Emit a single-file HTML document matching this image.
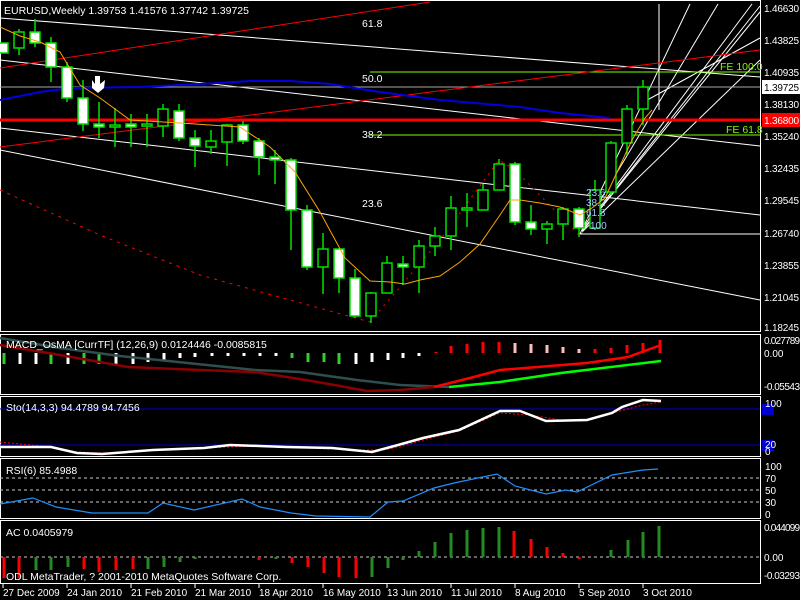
<!DOCTYPE html>
<html><head><meta charset="utf-8"><style>
html,body{margin:0;padding:0;background:#000;width:800px;height:600px;overflow:hidden}
svg{display:block}
text{font-family:"Liberation Sans",sans-serif;font-size:10.5px;fill:#fff}
.ax{font-size:10px}
</style></head><body>
<svg width="800" height="600" viewBox="0 0 800 600" xmlns="http://www.w3.org/2000/svg">
<rect width="800" height="600" fill="#000"/>
<rect x="0.5" y="0.5" width="760" height="331" fill="none" stroke="#fff"/>
<g stroke="#fff" stroke-width="1" fill="none">
<line x1="0" y1="18" x2="760" y2="77"/>
<line x1="0" y1="60" x2="760" y2="146"/>
<line x1="0" y1="128" x2="760" y2="215"/>
<line x1="0" y1="150" x2="760" y2="300"/>
<line x1="580" y1="234" x2="760" y2="234"/>
<line x1="659" y1="4" x2="659" y2="110"/>
<line x1="580" y1="234" x2="690" y2="4"/>
<line x1="580" y1="234" x2="718" y2="4"/>
<line x1="580" y1="234" x2="752" y2="4"/>
<line x1="580" y1="234" x2="760" y2="6"/>
<line x1="580" y1="234" x2="760" y2="60"/>
<line x1="580" y1="234" x2="760" y2="12"/>
<line x1="640" y1="104" x2="760" y2="38"/>
</g>
<line x1="0" y1="87" x2="760" y2="87" stroke="#aaa"/>
<line x1="370" y1="72" x2="760" y2="72" stroke="#7cfc00"/>
<line x1="370" y1="135" x2="760" y2="135" stroke="#7cfc00"/>
<g stroke="#f00" fill="none">
<line x1="0" y1="68" x2="430" y2="2"/>
<line x1="0" y1="147" x2="760" y2="50"/>
<line x1="0" y1="120" x2="760" y2="120" stroke-width="3"/>
<polyline stroke-dasharray="3,5" points="0,190 100,235 200,275 290,300 370,322"/>
<polyline stroke-dasharray="2,5" points="370,322 440,240 499,160 515,170 580,236 600,190"/>
</g>
<polyline fill="none" stroke="#0000e0" stroke-width="2" points="0,100 40,92 70,88 140,87 200,84 250,81 290,81 330,84 380,92 440,100 520,107 560,113 610,118"/>
<g stroke="#00e000" stroke-width="1.5">
<line x1="19" y1="29" x2="19" y2="55"/><line x1="35" y1="19" x2="35" y2="47"/><line x1="51" y1="37" x2="51" y2="82"/><line x1="67" y1="62" x2="67" y2="102"/><line x1="83" y1="80" x2="83" y2="131"/><line x1="99" y1="102" x2="99" y2="138"/><line x1="115" y1="108" x2="115" y2="147"/><line x1="131" y1="114" x2="131" y2="147"/><line x1="147" y1="114" x2="147" y2="147"/><line x1="163" y1="104" x2="163" y2="137"/><line x1="179" y1="104" x2="179" y2="141"/><line x1="195" y1="130" x2="195" y2="167"/><line x1="211" y1="130" x2="211" y2="154"/><line x1="227" y1="124" x2="227" y2="166"/><line x1="243" y1="121" x2="243" y2="144"/><line x1="259" y1="138" x2="259" y2="175"/><line x1="275" y1="150" x2="275" y2="184"/><line x1="291" y1="158" x2="291" y2="250"/><line x1="307" y1="205" x2="307" y2="270"/><line x1="323" y1="233" x2="323" y2="294"/><line x1="339" y1="248" x2="339" y2="293"/><line x1="355" y1="269" x2="355" y2="318"/><line x1="371" y1="292" x2="371" y2="323"/><line x1="387" y1="256" x2="387" y2="293"/><line x1="403" y1="256" x2="403" y2="285"/><line x1="419" y1="240" x2="419" y2="293"/><line x1="435" y1="227" x2="435" y2="256"/><line x1="451" y1="196" x2="451" y2="250"/><line x1="467" y1="193" x2="467" y2="227"/><line x1="483" y1="184" x2="483" y2="210"/><line x1="499" y1="159" x2="499" y2="190"/><line x1="515" y1="162" x2="515" y2="225"/><line x1="531" y1="205" x2="531" y2="235"/><line x1="547" y1="221" x2="547" y2="244"/><line x1="563" y1="207" x2="563" y2="240"/><line x1="579" y1="207" x2="579" y2="237"/><line x1="595" y1="180" x2="595" y2="230"/><line x1="611" y1="141" x2="611" y2="195"/><line x1="627" y1="105" x2="627" y2="155"/><line x1="643" y1="80" x2="643" y2="125"/>
</g>
<g stroke="#00e000" stroke-width="1.5">
<rect x="-2" y="43" width="10" height="10" fill="#fff"/>
<rect x="14" y="32" width="10" height="16" fill="#000"/>
<rect x="30" y="32" width="10" height="11" fill="#fff"/>
<rect x="46" y="43" width="10" height="24" fill="#fff"/>
<rect x="62" y="67" width="10" height="31" fill="#fff"/>
<rect x="78" y="98" width="10" height="26" fill="#fff"/>
<rect x="94" y="124" width="10" height="3" fill="#fff"/>
<rect x="110" y="125" width="10" height="2" fill="#000"/>
<rect x="126" y="124" width="10" height="3" fill="#fff"/>
<rect x="142" y="124" width="10" height="2" fill="#000"/>
<rect x="158" y="109" width="10" height="17" fill="#000"/>
<rect x="174" y="111" width="10" height="27" fill="#fff"/>
<rect x="190" y="138" width="10" height="8" fill="#fff"/>
<rect x="206" y="141" width="10" height="6" fill="#000"/>
<rect x="222" y="125" width="10" height="17" fill="#000"/>
<rect x="238" y="125" width="10" height="16" fill="#fff"/>
<rect x="254" y="141" width="10" height="16" fill="#fff"/>
<rect x="270" y="157" width="10" height="3" fill="#fff"/>
<rect x="286" y="160" width="10" height="50" fill="#fff"/>
<rect x="302" y="210" width="10" height="57" fill="#fff"/>
<rect x="318" y="249" width="10" height="18" fill="#000"/>
<rect x="334" y="249" width="10" height="29" fill="#fff"/>
<rect x="350" y="278" width="10" height="38" fill="#fff"/>
<rect x="366" y="293" width="10" height="23" fill="#000"/>
<rect x="382" y="263" width="10" height="30" fill="#000"/>
<rect x="398" y="264" width="10" height="3" fill="#fff"/>
<rect x="414" y="246" width="10" height="21" fill="#000"/>
<rect x="430" y="236" width="10" height="10" fill="#000"/>
<rect x="446" y="208" width="10" height="28" fill="#000"/>
<rect x="462" y="208" width="10" height="2" fill="#000"/>
<rect x="478" y="190" width="10" height="20" fill="#000"/>
<rect x="494" y="164" width="10" height="26" fill="#000"/>
<rect x="510" y="164" width="10" height="58" fill="#fff"/>
<rect x="526" y="222" width="10" height="7" fill="#fff"/>
<rect x="542" y="224" width="10" height="5" fill="#000"/>
<rect x="558" y="209" width="10" height="15" fill="#000"/>
<rect x="574" y="209" width="10" height="19" fill="#fff"/>
<rect x="590" y="190" width="10" height="38" fill="#000"/>
<rect x="606" y="143" width="10" height="49" fill="#000"/>
<rect x="622" y="109" width="10" height="34" fill="#000"/>
<rect x="638" y="87" width="10" height="22" fill="#000"/>
</g>
<polyline fill="none" stroke="#ffa500" stroke-width="1" points="0,27 20,36 40,42 60,52 80,85 100,98 130,120 180,123 240,127 270,147 295,172 320,212 345,258 370,281 390,282 405,284 420,280 440,276 460,262 480,244 500,215 510,200 520,200 540,203 560,207 580,215 592,208 605,198 618,170 632,140 645,118 652,110"/>
<polygon points="95,76 100,76 100,84 105,80 104,88 98,93 92,88 92,80 95,84" fill="#fff"/>
<text x="4" y="14">EURUSD,Weekly  1.39753 1.41576 1.37742 1.39725</text>
<text x="362" y="27">61.8</text>
<text x="362" y="82">50.0</text>
<text x="362" y="138">38.2</text>
<text x="362" y="207">23.6</text>
<text x="720" y="70" style="fill:#7cfc00">FE 100.0</text>
<text x="726" y="133" style="fill:#7cfc00">FE 61.8</text>
<text x="586" y="196" style="fill:#9cf;font-size:10px">23.6</text>
<text x="586" y="206" style="fill:#9cf;font-size:10px">38.2</text>
<text x="586" y="216" style="fill:#9cf;font-size:10px">61.8</text>
<text x="590" y="229" style="fill:#9cf;font-size:10px">100</text>
<g class="ax">
<text class="ax" x="764" y="12" textLength="35">1.46630</text>
<text class="ax" x="764" y="44" textLength="35">1.43825</text>
<text class="ax" x="764" y="76" textLength="35">1.40935</text>
<rect x="762" y="80" width="38" height="14" fill="#fff"/>
<text class="ax" x="764" y="91" style="fill:#000" textLength="35">1.39725</text>
<text class="ax" x="764" y="108" textLength="35">1.38130</text>
<rect x="762" y="113" width="38" height="14" fill="#f00"/>
<text class="ax" x="764" y="124" textLength="35">1.36800</text>
<text class="ax" x="764" y="140" textLength="35">1.35240</text>
<text class="ax" x="764" y="172" textLength="35">1.32435</text>
<text class="ax" x="764" y="204" textLength="35">1.29545</text>
<text class="ax" x="764" y="237" textLength="35">1.26740</text>
<text class="ax" x="764" y="269" textLength="35">1.23855</text>
<text class="ax" x="764" y="301" textLength="35">1.21045</text>
<text class="ax" x="764" y="331" textLength="35">1.18245</text>
</g>
<rect x="0.5" y="334.5" width="760" height="60" fill="none" stroke="#fff"/>
<g stroke-width="3">
<line x1="4" y1="353" x2="4" y2="364" stroke="#3c3"/><line x1="20" y1="353" x2="20" y2="364" stroke="#fff"/><line x1="36" y1="353" x2="36" y2="364" stroke="#fff"/><line x1="51" y1="353" x2="51" y2="364" stroke="#3c3"/><line x1="68" y1="353" x2="68" y2="364" stroke="#fff"/><line x1="84" y1="353" x2="84" y2="364" stroke="#3c3"/><line x1="99" y1="353" x2="99" y2="364" stroke="#3c3"/><line x1="116" y1="353" x2="116" y2="364" stroke="#fff"/><line x1="133" y1="353" x2="133" y2="364" stroke="#fff"/><line x1="148" y1="353" x2="148" y2="362" stroke="#fff"/><line x1="164" y1="353" x2="164" y2="360" stroke="#fff"/><line x1="180" y1="353" x2="180" y2="358" stroke="#fff"/><line x1="195" y1="353" x2="195" y2="357" stroke="#fff"/><line x1="212" y1="353" x2="212" y2="356" stroke="#fff"/><line x1="228" y1="353" x2="228" y2="356" stroke="#fff"/><line x1="244" y1="353" x2="244" y2="356" stroke="#fff"/><line x1="260" y1="353" x2="260" y2="356" stroke="#fff"/><line x1="276" y1="353" x2="276" y2="356" stroke="#fff"/><line x1="292" y1="353" x2="292" y2="358" stroke="#3c3"/><line x1="308" y1="353" x2="308" y2="362" stroke="#3c3"/><line x1="324" y1="353" x2="324" y2="362" stroke="#3c3"/><line x1="339" y1="353" x2="339" y2="364" stroke="#3c3"/><line x1="356" y1="353" x2="356" y2="364" stroke="#fff"/><line x1="372" y1="353" x2="372" y2="362" stroke="#fff"/><line x1="388" y1="353" x2="388" y2="360" stroke="#fff"/><line x1="403" y1="353" x2="403" y2="358" stroke="#fff"/><line x1="419" y1="353" x2="419" y2="356" stroke="#fff"/>
<line x1="436" y1="353" x2="436" y2="352" stroke="#f00"/><line x1="451" y1="353" x2="451" y2="346" stroke="#f00"/><line x1="467" y1="353" x2="467" y2="344" stroke="#f00"/><line x1="483" y1="353" x2="483" y2="342" stroke="#f00"/><line x1="499" y1="353" x2="499" y2="342" stroke="#f00"/><line x1="515" y1="353" x2="515" y2="343" stroke="#fbb"/><line x1="531" y1="353" x2="531" y2="344" stroke="#fbb"/><line x1="547" y1="353" x2="547" y2="345" stroke="#fbb"/><line x1="563" y1="353" x2="563" y2="347" stroke="#fbb"/><line x1="579" y1="353" x2="579" y2="349" stroke="#fbb"/><line x1="595" y1="353" x2="595" y2="349" stroke="#f00"/><line x1="611" y1="353" x2="611" y2="348" stroke="#f00"/><line x1="627" y1="353" x2="627" y2="345" stroke="#f00"/><line x1="643" y1="353" x2="643" y2="343" stroke="#f00"/><line x1="660" y1="353" x2="660" y2="340" stroke="#f00"/>
</g>
<polyline fill="none" stroke="#2f4f4f" stroke-width="2.5" points="0,338 60,348 120,356 178,362 255,370 300,372 357,380 400,385 449,387"/>
<polyline fill="none" stroke="#8b0000" stroke-width="2.5" points="0,345 60,355 128,367 200,370 255,372 306,380 340,386 367,391 400,390 434,387"/>
<polyline fill="none" stroke="#f00" stroke-width="2.5" points="434,387 470,378 500,370 587,363 628,357 661,345"/>
<polyline fill="none" stroke="#0f0" stroke-width="2.5" points="449,387 500,382 561,373 661,361"/>
<text x="6" y="348">MACD_OsMA [CurrTF] (12,26,9) 0.0124446 -0.0085815</text>
<text class="ax" x="764" y="344" textLength="36">0.027789</text>
<text class="ax" x="764" y="357">0.00</text>
<text class="ax" x="764" y="390" textLength="36">-0.05543</text>
<rect x="0.5" y="396.5" width="760" height="60" fill="none" stroke="#fff"/>
<line x1="0" y1="409" x2="760" y2="409" stroke="#00c"/>
<line x1="0" y1="445" x2="760" y2="445" stroke="#00c"/>
<polyline fill="none" stroke="#f00" stroke-dasharray="2,2" points="0,442 51,447 77,452 102,453 153,450 204,448 255,446 306,448 357,450 383,450 400,447 423,440 459,431 500,413 530,415 561,420 587,420 612,413 643,405 661,402"/>
<polyline fill="none" stroke="#fff" stroke-width="2.5" points="0,447 51,447 77,453 102,454 153,450 204,448 230,445 260,446 286,447 332,448 372,452 398,445 423,438 459,430 500,411 520,411 546,421 587,420 612,413 622,407 643,400 661,401"/>
<text x="6" y="411">Sto(14,3,3) 94.4789 94.7456</text>
<rect x="762" y="404" width="12" height="11" fill="#00c"/>
<rect x="762" y="440" width="12" height="11" fill="#00c"/>
<text class="ax" x="765" y="407">100</text>
<text class="ax" x="765" y="448">20</text>
<text class="ax" x="765" y="455">0</text>
<rect x="0.5" y="458.5" width="760" height="60" fill="none" stroke="#fff"/>
<g stroke="#ccc" stroke-dasharray="3,3"><line x1="0" y1="478" x2="760" y2="478"/><line x1="0" y1="490" x2="760" y2="490"/><line x1="0" y1="502" x2="760" y2="502"/></g>
<polyline fill="none" stroke="#1e90ff" stroke-width="1.2" points="0,504 33,498 56,507 92,513 148,513 163,503 194,510 242,499 260,507 291,513 316,516 370,517 388,502 403,501 434,488 454,483 497,474 515,486 546,494 566,490 577,492 612,475 643,470 658,469"/>
<text x="6" y="474">RSI(6) 85.4988</text>
<text class="ax" x="765" y="470">100</text>
<text class="ax" x="765" y="482">70</text>
<text class="ax" x="765" y="494">50</text>
<text class="ax" x="765" y="506">30</text>
<text class="ax" x="765" y="518">0</text>
<rect x="0.5" y="520.5" width="760" height="63" fill="none" stroke="#fff"/>
<line x1="0" y1="557" x2="760" y2="557" stroke="#ccc" stroke-dasharray="3,3"/>
<g stroke-width="3">
<line x1="4" y1="557" x2="4" y2="578" stroke="#f00"/><line x1="19" y1="557" x2="19" y2="578" stroke="#f00"/><line x1="36" y1="557" x2="36" y2="570" stroke="#228b22"/><line x1="51" y1="557" x2="51" y2="570" stroke="#228b22"/><line x1="68" y1="557" x2="68" y2="567" stroke="#228b22"/><line x1="84" y1="557" x2="84" y2="569" stroke="#f00"/><line x1="99" y1="557" x2="99" y2="572" stroke="#f00"/><line x1="116" y1="557" x2="116" y2="570" stroke="#f00"/><line x1="133" y1="557" x2="133" y2="569" stroke="#f00"/><line x1="148" y1="557" x2="148" y2="569" stroke="#228b22"/><line x1="164" y1="557" x2="164" y2="567" stroke="#228b22"/><line x1="180" y1="557" x2="180" y2="562" stroke="#228b22"/><line x1="195" y1="557" x2="195" y2="559" stroke="#228b22"/><line x1="259" y1="557" x2="259" y2="560" stroke="#f00"/><line x1="276" y1="557" x2="276" y2="559" stroke="#228b22"/><line x1="292" y1="557" x2="292" y2="563" stroke="#f00"/><line x1="308" y1="557" x2="308" y2="567" stroke="#f00"/><line x1="324" y1="557" x2="324" y2="573" stroke="#f00"/><line x1="339" y1="557" x2="339" y2="577" stroke="#f00"/><line x1="356" y1="557" x2="356" y2="578" stroke="#f00"/><line x1="372" y1="557" x2="372" y2="577" stroke="#228b22"/><line x1="388" y1="557" x2="388" y2="568" stroke="#228b22"/><line x1="403" y1="557" x2="403" y2="560" stroke="#228b22"/>
<line x1="419" y1="557" x2="419" y2="551" stroke="#228b22"/><line x1="435" y1="557" x2="435" y2="542" stroke="#228b22"/><line x1="451" y1="557" x2="451" y2="533" stroke="#228b22"/><line x1="467" y1="557" x2="467" y2="530" stroke="#228b22"/><line x1="483" y1="557" x2="483" y2="528" stroke="#228b22"/><line x1="499" y1="557" x2="499" y2="527" stroke="#228b22"/><line x1="514" y1="557" x2="514" y2="531" stroke="#f00"/><line x1="531" y1="557" x2="531" y2="539" stroke="#f00"/><line x1="547" y1="557" x2="547" y2="547" stroke="#f00"/><line x1="563" y1="557" x2="563" y2="553" stroke="#f00"/><line x1="579" y1="557" x2="579" y2="559" stroke="#f00"/><line x1="611" y1="557" x2="611" y2="550" stroke="#228b22"/><line x1="628" y1="557" x2="628" y2="540" stroke="#228b22"/><line x1="643" y1="557" x2="643" y2="532" stroke="#228b22"/><line x1="659" y1="557" x2="659" y2="526" stroke="#228b22"/>
</g>
<text x="6" y="536">AC 0.0405979</text>
<text x="6" y="580">ODL MetaTrader, ? 2001-2010 MetaQuotes Software Corp.</text>
<text class="ax" x="764" y="531" textLength="36">0.044099</text>
<text class="ax" x="764" y="561">0.00</text>
<text class="ax" x="764" y="579" textLength="36">-0.03293</text>
<g stroke="#fff"><line x1="3" y1="584" x2="3" y2="588"/><line x1="67" y1="584" x2="67" y2="588"/><line x1="131" y1="584" x2="131" y2="588"/><line x1="195" y1="584" x2="195" y2="588"/><line x1="259" y1="584" x2="259" y2="588"/><line x1="323" y1="584" x2="323" y2="588"/><line x1="387" y1="584" x2="387" y2="588"/><line x1="451" y1="584" x2="451" y2="588"/><line x1="515" y1="584" x2="515" y2="588"/><line x1="579" y1="584" x2="579" y2="588"/><line x1="643" y1="584" x2="643" y2="588"/></g>
<g class="ax">
<text class="ax" x="3" y="596">27 Dec 2009</text>
<text class="ax" x="67" y="596">24 Jan 2010</text>
<text class="ax" x="131" y="596">21 Feb 2010</text>
<text class="ax" x="195" y="596">21 Mar 2010</text>
<text class="ax" x="259" y="596">18 Apr 2010</text>
<text class="ax" x="323" y="596">16 May 2010</text>
<text class="ax" x="387" y="596">13 Jun 2010</text>
<text class="ax" x="451" y="596">11 Jul 2010</text>
<text class="ax" x="515" y="596">8 Aug 2010</text>
<text class="ax" x="579" y="596">5 Sep 2010</text>
<text class="ax" x="643" y="596">3 Oct 2010</text>
</g>
</svg>
</body></html>
